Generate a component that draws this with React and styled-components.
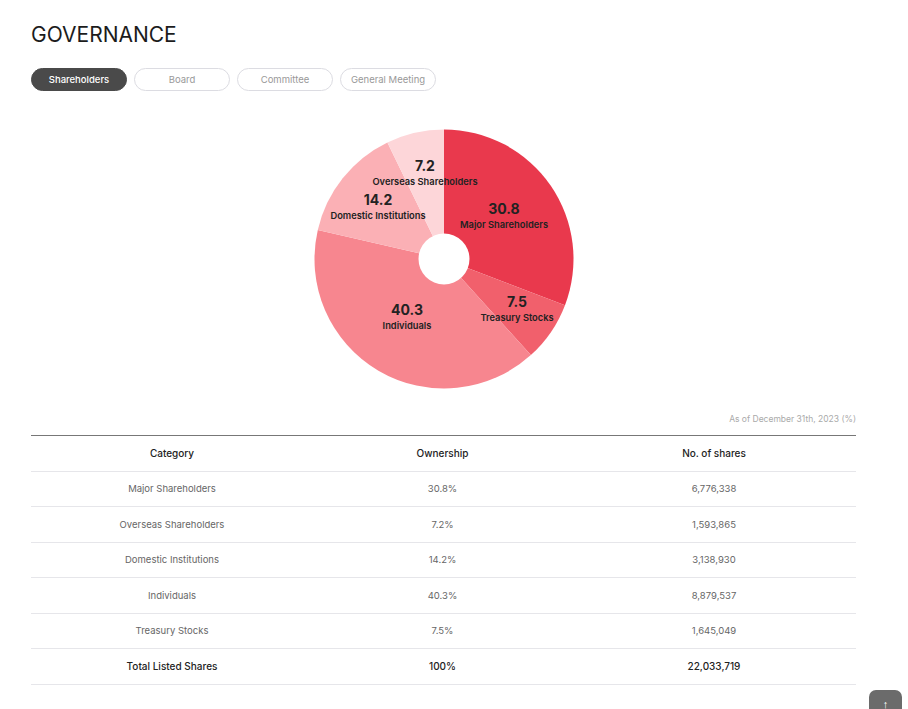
import React from "react";
import styled, { createGlobalStyle } from "styled-components";

const GlobalStyle = createGlobalStyle`
  html, body {
    margin: 0;
    padding: 0;
    background: #ffffff;
    font-family: "Inter", "Noto Sans", sans-serif;
    color: #222222;
  }
`;

const Page = styled.div`
  padding: 20px 52px 40px 31px;
`;

const Title = styled.h1`
  margin: 0;
  font-size: 21px;
  font-weight: 400;
  line-height: 30px;
  color: #1c1c1c;
`;

const Tabs = styled.div`
  display: flex;
  gap: 7px;
  margin-top: 18px;
`;

const Tab = styled.button`
  width: 96px;
  height: 23px;
  border-radius: 12px;
  border: 1px solid ${(p) => (p.$active ? "#4a4a4a" : "#dcdce2")};
  background: ${(p) => (p.$active ? "#4a4a4a" : "#ffffff")};
  color: ${(p) => (p.$active ? "#ffffff" : "#999999")};
  font-family: "Inter", sans-serif;
  font-size: 9.5px;
  font-weight: ${(p) => (p.$active ? 500 : 400)};
  padding: 0;
  cursor: pointer;
`;

const ChartWrap = styled.div`
  display: flex;
  justify-content: center;
  margin-top: 38px;
`;

const Note = styled.div`
  text-align: right;
  font-size: 8.5px;
  color: #aaaaaa;
  margin-top: 25px;
`;

const Table = styled.div`
  margin-top: 11px;
  border-top: 1px solid #777777;
`;

const Row = styled.div`
  display: grid;
  grid-template-columns: 282px 259px 1fr;
  height: 35.5px;
  align-items: center;
  border-bottom: 1px solid #e6e6ea;
  box-sizing: border-box;
`;

const Cell = styled.div`
  text-align: center;
  font-size: ${(p) => (p.$strong ? "10px" : "9.5px")};
  font-weight: ${(p) => (p.$strong ? 500 : 400)};
  color: ${(p) => (p.$strong ? "#222222" : "#666666")};
`;

const TopButton = styled.button`
  position: fixed;
  right: 6px;
  bottom: -14px;
  width: 33px;
  height: 33px;
  border-radius: 7px;
  border: none;
  background: #6b6b6b;
  color: #ffffff;
  font-size: 11px;
  padding: 0 0 6px;
  display: flex;
  align-items: center;
  justify-content: center;
`;

const slices = [
  { name: "Major Shareholders", value: 30.8, color: "#e9394d", lx: 503, ly: 209 },
  { name: "Treasury Stocks", value: 7.5, color: "#f1606c", lx: 516, ly: 302 },
  { name: "Individuals", value: 40.3, color: "#f7868f", lx: 406, ly: 310 },
  { name: "Domestic Institutions", value: 14.2, color: "#fbb0b5", lx: 377, ly: 200 },
  { name: "Overseas Shareholders", value: 7.2, color: "#fdd6d9", lx: 424, ly: 166 },
];

const shares = [
  ["Major Shareholders", "30.8%", "6,776,338"],
  ["Overseas Shareholders", "7.2%", "1,593,865"],
  ["Domestic Institutions", "14.2%", "3,138,930"],
  ["Individuals", "40.3%", "8,879,537"],
  ["Treasury Stocks", "7.5%", "1,645,049"],
];

function Pie() {
  const cx = 130;
  const cy = 130;
  const r = 129.5;
  const ox = 443 - cx;
  const oy = 259 - cy;
  let start = 0;
  const pt = (a) => {
    const rad = (a * Math.PI) / 180;
    return [cx + r * Math.sin(rad), cy - r * Math.cos(rad)];
  };
  const paths = slices.map((s) => {
    const sweep = (s.value / 100) * 360;
    const [x1, y1] = pt(start);
    const [x2, y2] = pt(start + sweep);
    start += sweep;
    const large = sweep > 180 ? 1 : 0;
    return (
      <path
        key={s.name}
        d={`M${cx} ${cy} L${x1} ${y1} A${r} ${r} 0 ${large} 1 ${x2} ${y2} Z`}
        fill={s.color}
      />
    );
  });
  return (
    <svg width="260" height="260" viewBox="0 0 260 260">
      {paths}
      <circle cx={cx} cy={cy} r="25.5" fill="#ffffff" />
      {slices.map((s) => (
        <g key={s.name} fontFamily="Inter, sans-serif" fill="#222222" textAnchor="middle">
          <text x={s.lx - ox} y={s.ly - oy + 5} fontSize="14" fontWeight="700">
            {s.value}
          </text>
          <text x={s.lx - ox} y={s.ly - oy + 19} fontSize="9.3" fontWeight="600">
            {s.name}
          </text>
        </g>
      ))}
    </svg>
  );
}

export default function App() {
  return (
    <>
      <GlobalStyle />
      <Page>
        <Title>GOVERNANCE</Title>
        <Tabs>
          <Tab $active>Shareholders</Tab>
          <Tab>Board</Tab>
          <Tab>Committee</Tab>
          <Tab>General Meeting</Tab>
        </Tabs>
        <ChartWrap>
          <Pie />
        </ChartWrap>
        <Note>As of December 31th, 2023 (%)</Note>
        <Table>
          <Row>
            <Cell $strong>Category</Cell>
            <Cell $strong>Ownership</Cell>
            <Cell $strong>No. of shares</Cell>
          </Row>
          {shares.map((row) => (
            <Row key={row[0]}>
              {row.map((c, i) => (
                <Cell key={i}>{c}</Cell>
              ))}
            </Row>
          ))}
          <Row>
            <Cell $strong>Total Listed Shares</Cell>
            <Cell $strong>100%</Cell>
            <Cell $strong>22,033,719</Cell>
          </Row>
        </Table>
      </Page>
      <TopButton aria-label="Back to top">↑</TopButton>
    </>
  );
}
